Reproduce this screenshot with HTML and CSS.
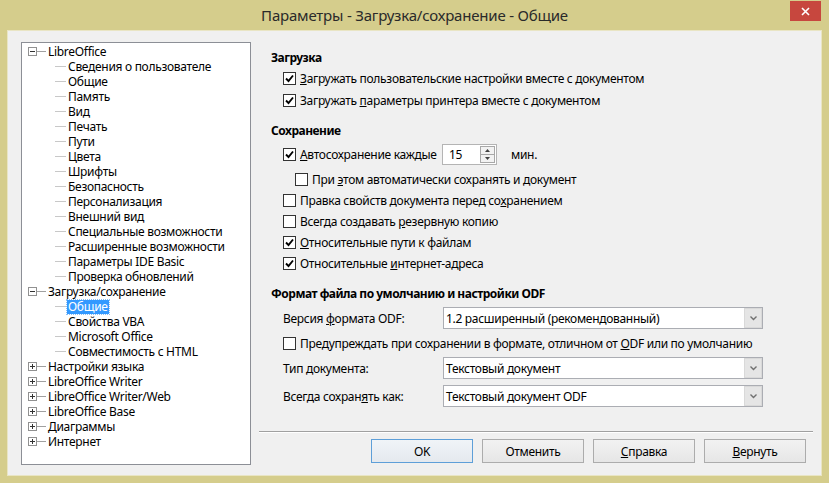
FILE: index.html
```html
<!DOCTYPE html>
<html lang="ru">
<head>
  <meta charset="UTF-8">
  <title>Параметры - Загрузка/сохранение - Общие</title>
  <link rel="stylesheet" href="styles.css">
</head>
<body>

<div class="window">
  <div class="titlebar">
    <span class="title">Параметры - Загрузка/сохранение - Общие</span>
    <span class="close-btn">
      <svg width="9" height="9" viewBox="0 0 9 9"><path d="M1 1 L8 8 M8 1 L1 8" stroke="#fff" stroke-width="1.6"/></svg>
    </span>
  </div>

  <div class="client">
    <!-- left tree -->
    <div class="tree">
      <div class="node top"><span class="expander minus"></span><span class="branch"></span><span class="label">LibreOffice</span></div>
      <div class="node child"><span class="branch"></span><span class="label">Сведения о пользователе</span></div>
      <div class="node child"><span class="branch"></span><span class="label">Общие</span></div>
      <div class="node child"><span class="branch"></span><span class="label">Память</span></div>
      <div class="node child"><span class="branch"></span><span class="label">Вид</span></div>
      <div class="node child"><span class="branch"></span><span class="label">Печать</span></div>
      <div class="node child"><span class="branch"></span><span class="label">Пути</span></div>
      <div class="node child"><span class="branch"></span><span class="label">Цвета</span></div>
      <div class="node child"><span class="branch"></span><span class="label">Шрифты</span></div>
      <div class="node child"><span class="branch"></span><span class="label">Безопасность</span></div>
      <div class="node child"><span class="branch"></span><span class="label">Персонализация</span></div>
      <div class="node child"><span class="branch"></span><span class="label">Внешний вид</span></div>
      <div class="node child"><span class="branch"></span><span class="label">Специальные возможности</span></div>
      <div class="node child"><span class="branch"></span><span class="label">Расширенные возможности</span></div>
      <div class="node child"><span class="branch"></span><span class="label">Параметры IDE Basic</span></div>
      <div class="node child"><span class="branch"></span><span class="label">Проверка обновлений</span></div>
      <div class="node top"><span class="expander minus"></span><span class="branch"></span><span class="label">Загрузка/сохранение</span></div>
      <div class="node child"><span class="branch"></span><span class="label selected">Общие</span></div>
      <div class="node child"><span class="branch"></span><span class="label">Свойства VBA</span></div>
      <div class="node child"><span class="branch"></span><span class="label">Microsoft Office</span></div>
      <div class="node child"><span class="branch"></span><span class="label">Совместимость с HTML</span></div>
      <div class="node top"><span class="expander plus"></span><span class="branch"></span><span class="label">Настройки языка</span></div>
      <div class="node top"><span class="expander plus"></span><span class="branch"></span><span class="label">LibreOffice Writer</span></div>
      <div class="node top"><span class="expander plus"></span><span class="branch"></span><span class="label">LibreOffice Writer/Web</span></div>
      <div class="node top"><span class="expander plus"></span><span class="branch"></span><span class="label">LibreOffice Base</span></div>
      <div class="node top"><span class="expander plus"></span><span class="branch"></span><span class="label">Диаграммы</span></div>
      <div class="node top"><span class="expander plus"></span><span class="branch"></span><span class="label">Интернет</span></div>
    </div>

    <!-- right page -->
    <div class="page">
      <div class="options">
        <div class="heading h-load">Загрузка</div>
        <div class="row cb-row r-cb1"><span class="checkbox checked"></span><span><u>З</u>агружать пользовательские настройки вместе с документом</span></div>
        <div class="row cb-row r-cb2"><span class="checkbox checked"></span><span>Загружать <u>п</u>араметры принтера вместе с документом</span></div>

        <div class="heading h-save">Сохранение</div>
        <div class="row cb-row r-auto">
          <span class="checkbox checked"></span><span class="auto-label"><u>А</u>втосохранение каждые</span>
          <span class="spin">
            <span class="spin-value">15</span>
            <span class="spin-buttons">
              <span class="spin-up"><svg width="5" height="3" viewBox="0 0 5 3"><path d="M0 3 L2.5 0 L5 3 Z" fill="#404040"/></svg></span>
              <span class="spin-down"><svg width="5" height="3" viewBox="0 0 5 3"><path d="M0 0 L2.5 3 L5 0 Z" fill="#404040"/></svg></span>
            </span>
          </span>
          <span class="unit">мин.</span>
        </div>
        <div class="row cb-row sub r-sub"><span class="checkbox"></span><span>При <u>э</u>том автоматически сохранять и документ</span></div>
        <div class="row cb-row r-tight"><span class="checkbox"></span><span>Правка свойств документа перед со<u>х</u>ранением</span></div>
        <div class="row cb-row r-tight"><span class="checkbox"></span><span>Всегда создавать <u>р</u>езервную копию</span></div>
        <div class="row cb-row r-tight"><span class="checkbox checked"></span><span><u>О</u>тносительные пути к файлам</span></div>
        <div class="row cb-row r-tight"><span class="checkbox checked"></span><span>Относительные <u>и</u>нтернет-адреса</span></div>

        <div class="heading h-format">Формат файла по умолчанию и настройки ODF</div>
        <div class="row field-row r-ver">
          <span class="field-label">Версия <u>ф</u>ормата ODF:</span>
          <span class="select"><span class="select-value">1.2 расширенный (рекомендованный)</span><span class="drop"></span></span>
        </div>
        <div class="row cb-row r-warn"><span class="checkbox"></span><span>Предупреждать при сохранении в формате, отличном от <u>O</u>DF или по умолчанию</span></div>
        <div class="row field-row r-type">
          <span class="field-label">Тип <u>д</u>окумента:</span>
          <span class="select"><span class="select-value">Текстовый документ</span><span class="drop"></span></span>
        </div>
        <div class="row field-row r-always">
          <span class="field-label">Всегда сохран<u>я</u>ть как:</span>
          <span class="select"><span class="select-value">Текстовый документ ODF</span><span class="drop"></span></span>
        </div>
      </div>

      <div class="separator"></div>

      <div class="buttons">
        <button class="btn default">OK</button>
        <button class="btn">Отменить</button>
        <button class="btn"><u>С</u>правка</button>
        <button class="btn"><u>В</u>ернуть</button>
      </div>
    </div>
  </div>
</div>

</body>
</html>
```

FILE: styles.css
```css
body {
  margin: 0;
  background-color: #D5CD8C;
  font-family: 'Noto Sans', sans-serif;
  font-size: 12px;
  letter-spacing: -0.3px;
  color: #000;
}

.window {
  width: 829px;
  height: 483px;
  display: flex;
  flex-direction: column;
}

/* title bar */
.titlebar {
  height: 31px;
  display: grid;
  grid-template-columns: 1fr auto 1fr;
  padding: 0 8px;
}

.title {
  grid-column: 2;
  font-size: 15px;
  letter-spacing: -0.2px;
  line-height: 31px;
  color: #2a2a2a;
}

.close-btn {
  grid-column: 3;
  justify-self: end;
  width: 31px;
  height: 20px;
  margin-top: 1px;
  background-color: #C7473E;
  display: flex;
  align-items: center;
  justify-content: center;
}

/* client area */
.client {
  margin: 0 8px;
  height: 444px;
  background-color: #F0F0F0;
  box-shadow: 0 0 0 1px #E9E5C4;
  display: flex;
}

.tree {
  box-sizing: border-box;
  width: 230px;
  height: 423px;
  margin: 11px 0 0 13px;
  padding-top: 1px;
  background-color: #fff;
  border: 1px solid #8C8F96;
}

.node {
  height: 15px;
  display: flex;
  align-items: center;
  white-space: nowrap;
}

.node.top {
  padding-left: 6px;
}

.node.child {
  padding-left: 33px;
}

.expander {
  box-sizing: border-box;
  width: 9px;
  height: 9px;
  border: 1px solid #919191;
  background-color: #fff;
  position: relative;
}

.expander::before {
  content: "";
  position: absolute;
  left: 1px;
  top: 3px;
  width: 5px;
  height: 1px;
  background-color: #333;
}

.expander.plus::after {
  content: "";
  position: absolute;
  left: 3px;
  top: 1px;
  width: 1px;
  height: 5px;
  background-color: #333;
}

.node.top .branch {
  width: 9px;
  height: 1px;
  background-color: #A0A0A0;
}

.node.child .branch {
  width: 11px;
  height: 1px;
  background-color: #C8C8C8;
}

.label {
  margin-left: 2px;
  line-height: 14px;
}

.label.selected {
  background-color: #3399FF;
  color: #fff;
  padding: 0 1px;
  margin-left: 1px;
  outline: 1px dotted #8ABFF5;
}

/* right page */
.page {
  flex: 1;
  display: flex;
  flex-direction: column;
  margin: 0 8px 0 8px;
}

.options {
  flex: 1;
  padding-top: 17px;
}

.heading {
  font-weight: bold;
  letter-spacing: -0.5px;
  height: 20px;
  line-height: 20px;
  padding-left: 12px;
}

.h-save {
  margin-top: 11px;
}

.h-format {
  margin-top: 11px;
}

.row {
  display: flex;
  align-items: center;
  white-space: nowrap;
}

.cb-row {
  height: 20px;
  padding-left: 24px;
}

.cb-row.sub {
  padding-left: 36px;
}

.r-cb2 { margin-top: 2px; }
.r-auto { margin-top: 3px; height: 21px; }
.r-sub { margin-top: 4px; }
.r-tight { margin-top: 1px; }
.r-warn { margin-top: 4px; }

.checkbox {
  box-sizing: border-box;
  width: 13px;
  height: 13px;
  border: 1px solid #333;
  background-color: #fff;
  margin-right: 4px;
  flex-shrink: 0;
  display: flex;
  align-items: center;
  justify-content: center;
}

.checkbox.checked::after {
  content: "";
  width: 9px;
  height: 9px;
  background: url("data:image/svg+xml;utf8,<svg xmlns='http://www.w3.org/2000/svg' width='9' height='9' viewBox='0 0 9 9'><path d='M1 4.5 L3.5 7 L8 1.5' fill='none' stroke='black' stroke-width='1.9'/></svg>") no-repeat center;
}

.auto-label {
  width: 142px;
}

.spin {
  box-sizing: border-box;
  width: 55px;
  height: 21px;
  border: 1px solid #B4B4B4;
  background-color: #fff;
  display: flex;
  align-items: center;
  justify-content: space-between;
  padding: 1px;
}

.spin-value {
  padding-left: 5px;
}

.spin-buttons {
  box-sizing: border-box;
  width: 15px;
  height: 17px;
  border: 1px solid #A8A8A8;
  display: flex;
  flex-direction: column;
  background-color: #F2F2F2;
}

.spin-up,
.spin-down {
  flex: 1;
  display: flex;
  align-items: center;
  justify-content: center;
}

.spin-up {
  border-bottom: 1px solid #A8A8A8;
}

.unit {
  margin-left: 14px;
}

.field-row {
  height: 22px;
  padding-left: 24px;
}

.r-ver { margin-top: 3px; }
.r-type { margin-top: 4px; }
.r-always { margin-top: 6px; }

.field-label {
  width: 160px;
}

.select {
  box-sizing: border-box;
  width: 320px;
  height: 22px;
  border: 1px solid #ABADB3;
  background-color: #fff;
  display: flex;
  align-items: center;
}

.select-value {
  flex: 1;
  padding-left: 2px;
}

.drop {
  box-sizing: border-box;
  width: 18px;
  height: 20px;
  background: #E5E5E5 url("data:image/svg+xml;utf8,<svg xmlns='http://www.w3.org/2000/svg' width='7' height='5' viewBox='0 0 7 5'><path d='M0.5 0.5 L3.5 3.5 L6.5 0.5' fill='none' stroke='%23707070' stroke-width='1.4'/></svg>") no-repeat center;
  border: 1px solid #D9D9D9;
}

.separator {
  border-top: 1px solid #A0A0A0;
  border-bottom: 1px solid #FFFFFF;
  margin-bottom: 6px;
}

.buttons {
  display: flex;
  justify-content: flex-end;
  gap: 9px;
  padding-right: 7px;
  margin-bottom: 12px;
}

.btn {
  box-sizing: border-box;
  width: 102px;
  height: 24px;
  font-family: 'Noto Sans', sans-serif;
  font-size: 12px;
  letter-spacing: -0.3px;
  color: #000;
  background: linear-gradient(#F2F2F2, #E6E6E6);
  border: 1px solid #ACACAC;
  padding: 0;
}

.btn.default {
  border-color: #5E9FD8;
  background: linear-gradient(#F0F4F8, #E5E9EE);
}
```
